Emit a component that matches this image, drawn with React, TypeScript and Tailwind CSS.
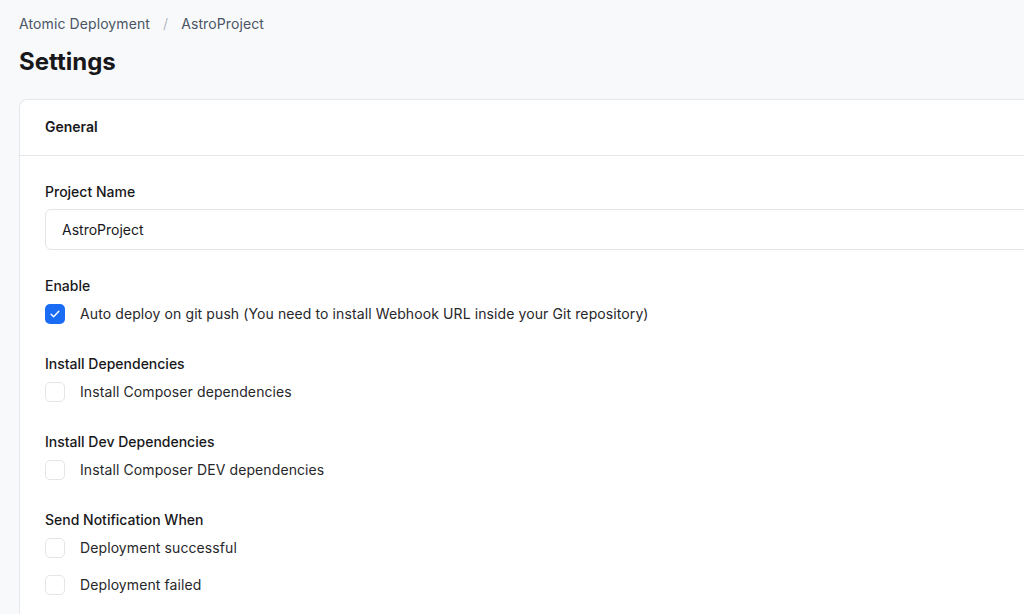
import React from "react";

function CheckIcon() {
  return (
    <svg viewBox="0 0 20 20" className="h-[14px] w-[14px]" fill="none">
      <path d="M4.5 10.5l3.5 3.5 7.5-8" stroke="white" strokeWidth="2" strokeLinecap="round" strokeLinejoin="round" />
    </svg>
  );
}

function Checkbox({ checked, label }: { checked?: boolean; label: string }) {
  return (
    <label className="flex items-center gap-[15px]">
      <span
        className={
          checked
            ? "flex h-5 w-5 shrink-0 items-center justify-center rounded-[5px] bg-[#1a6cf5]"
            : "flex h-5 w-5 shrink-0 items-center justify-center rounded-[5px] border border-[#e3e5e8] bg-white"
        }
      >
        {checked && <CheckIcon />}
      </span>
      <span className="text-[14px] leading-5 tracking-[0.1px] text-[#27272a]">{label}</span>
    </label>
  );
}

function Field({ title, children, gap = "mt-2" }: { title: string; children: React.ReactNode; gap?: string }) {
  return (
    <div>
      <div className="text-[14px] font-medium leading-5 text-[#18181b]">{title}</div>
      <div className={gap}>{children}</div>
    </div>
  );
}

export default function App() {
  return (
    <div
      className="h-[614px] w-[1024px] overflow-hidden bg-[#f8f9fb]"
      style={{ fontFamily: "Inter, 'Noto Sans', Arial, sans-serif" }}
    >
      <div className="w-[1120px] pl-[19px] pt-[14px]">
        <nav className="flex items-center gap-[13px] text-[14px] leading-5 tracking-[0.1px] text-[#4b5563]">
          <span>Atomic Deployment</span>
          <span className="text-[#b5bac2]">/</span>
          <span>AstroProject</span>
        </nav>
        <h1 className="mt-[12px] text-[24px] font-bold leading-8 text-[#18181b]">Settings</h1>

        <div className="mt-[21px] rounded-[8px] border border-[#e6e7ea] bg-white">
          <div className="border-b border-[#e6e7ea] px-[25px] pt-[17px] pb-[18px] text-[14px] font-semibold leading-5 text-[#18181b]">
            General
          </div>
          <div className="flex flex-col gap-[26px] px-[25px] pt-[26px] pb-10">
            <Field title="Project Name" gap="mt-[7px]">
              <div className="flex h-[41px] items-center rounded-[6px] border border-[#e3e5e8] bg-white px-4 text-[14px] text-[#18181b]">
                AstroProject
              </div>
            </Field>
            <div className="flex flex-col gap-[30px]">
              <Field title="Enable">
                <Checkbox checked label="Auto deploy on git push (You need to install Webhook URL inside your Git repository)" />
              </Field>
              <Field title="Install Dependencies">
                <Checkbox label="Install Composer dependencies" />
              </Field>
              <Field title="Install Dev Dependencies">
                <Checkbox label="Install Composer DEV dependencies" />
              </Field>
              <Field title="Send Notification When">
                <div className="flex flex-col gap-[17px]">
                  <Checkbox label="Deployment successful" />
                  <Checkbox label="Deployment failed" />
                </div>
              </Field>
            </div>
          </div>
        </div>
      </div>
    </div>
  );
}
